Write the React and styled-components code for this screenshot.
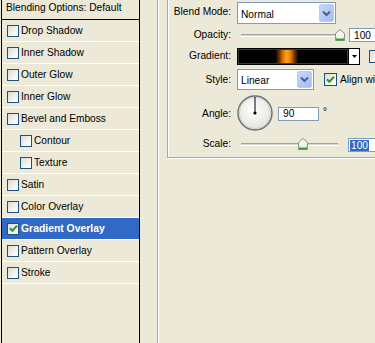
import React from "react";
import styled, { createGlobalStyle } from "styled-components";

const GlobalStyle = createGlobalStyle`
  html, body {
    margin: 0;
    padding: 0;
    background: #ece9d8;
  }
  body {
    font-family: "Liberation Sans", Arial, sans-serif;
    font-size: 10.2px;
    color: #000;
  }
`;

const Screen = styled.div`
  display: flex;
  width: 375px;
  height: 343px;
  overflow: hidden;
  background: #ece9d8;
`;

/* ---------- styles list (left) ---------- */

const StylesList = styled.div`
  flex: none;
  width: 137px;
  margin-left: 1px;
  border-left: 1px solid #000;
  border-right: 1px solid #000;
  display: flex;
  flex-direction: column;
`;

const ListHeader = styled.div`
  height: 15px;
  line-height: 15px;
  padding: 0 0 4px 4px;
  border-bottom: 1px solid #000;
  white-space: nowrap;
`;

const ListItem = styled.div`
  display: flex;
  align-items: center;
  gap: 2px;
  height: 21px;
  padding-left: ${(p) => (p.$indent ? "18px" : "5px")};
  border-bottom: 1px solid #fff;
  white-space: nowrap;
  background: ${(p) => (p.$selected ? "#316ac5" : "transparent")};
  color: ${(p) => (p.$selected ? "#fff" : "#000")};
  font-weight: ${(p) => (p.$selected ? "bold" : "normal")};
  font-size: ${(p) => (p.$selected ? "10.4px" : "10.2px")};
`;

const CheckBox = styled.span`
  flex: none;
  display: inline-flex;
  align-items: center;
  justify-content: center;
  width: ${(p) => p.$size || 12}px;
  height: ${(p) => p.$size || 12}px;
  box-sizing: border-box;
  border: 1px solid #1c5180;
  background: linear-gradient(135deg, #dcdcd5 0%, #f4f4f0 60%, #ffffff 100%);
`;

/* ---------- settings (right) ---------- */

const SettingsArea = styled.div`
  flex: 1;
  padding-left: 17px;
  display: flex;
`;

const OuterGroup = styled.div`
  flex: 1;
  border-left: 1px solid #aca899;
  box-shadow: inset 1px 0 0 #fff;
  padding-left: 9px;
`;

const InnerGroup = styled.div`
  width: 300px;
  align-self: flex-start;
  padding: 2px 0 5px 0;
  border-left: 1px solid #aca899;
  border-bottom: 1px solid #aca899;
  box-shadow: inset 1px 0 0 #fff, 0 1px 0 #fff;
  display: flex;
  flex-direction: column;
`;

const FormRow = styled.div`
  display: flex;
  align-items: center;
  height: ${(p) => p.$h}px;
  margin-top: ${(p) => p.$top || 0}px;
`;

const Label = styled.div`
  flex: none;
  width: 63px;
  margin-right: 6px;
  text-align: right;
  white-space: nowrap;
  padding-bottom: ${(p) => (p.$lift || 0) * 2}px;
`;

const Combo = styled.div`
  flex: none;
  display: flex;
  align-items: stretch;
  width: ${(p) => p.$w}px;
  height: ${(p) => p.$h}px;
  box-sizing: border-box;
  border: 1px solid #7f9db9;
  background: #fff;
  padding: 1px;
`;

const ComboText = styled.div`
  flex: 1;
  display: flex;
  align-items: center;
  padding-left: 2px;
  padding-top: 2px;
`;

const ComboButton = styled.div`
  flex: none;
  width: 15px;
  box-sizing: border-box;
  border: 1px solid #bccbf1;
  border-radius: 2px;
  background: linear-gradient(135deg, #c7d6fb 0%, #b4c8f5 55%, #a5bcef 100%);
  display: flex;
  align-items: center;
  justify-content: center;
`;

const SliderBox = styled.div`
  flex: none;
  position: relative;
  width: 108px;
  height: 12px;
  align-self: flex-start;
  margin-top: ${(p) => p.$top || 0}px;
`;

const SliderTrack = styled.div`
  margin: 5px 0 0 4px;
  width: 97px;
  height: 1px;
  border-top: 1px solid #a4a39e;
  border-bottom: 1px solid #fff;
  background: #d6d4ca;
`;

const SliderThumb = styled.svg`
  position: absolute;
  top: 0;
`;

const NumInput = styled.div`
  flex: none;
  width: ${(p) => p.$w}px;
  height: 14px;
  box-sizing: border-box;
  margin-left: ${(p) => p.$ml || 0}px;
  border: 1px solid #7f9db9;
  background: #fff;
  padding-left: ${(p) => (p.$selected ? 1 : 4)}px;
  display: flex;
  align-items: center;
`;

const Selection = styled.span`
  background: ${(p) => (p.$on ? "#316ac5" : "transparent")};
  color: ${(p) => (p.$on ? "#fff" : "#000")};
  padding: 0 1px;
  line-height: 11px;
`;

const GradientSwatch = styled.div`
  flex: none;
  width: 112px;
  height: 17px;
  box-sizing: border-box;
  border: 1px solid #000;
  box-shadow: inset 0 0 0 1px #3a3a3a;
  background: linear-gradient(
    to right,
    #000 0%,
    #000 34%,
    #5a2a00 37%,
    #e07800 41%,
    #ffa419 44.5%,
    #e07800 48%,
    #5a2a00 52%,
    #000 55%,
    #000 100%
  );
`;

const SwatchArrow = styled.div`
  flex: none;
  width: 11px;
  height: 17px;
  box-sizing: border-box;
  border: 1px solid #000;
  border-left: none;
  background: #fff;
  display: flex;
  align-items: center;
  justify-content: center;
`;

const InlineCheck = styled.div`
  flex: none;
  display: flex;
  align-items: center;
  gap: 3px;
  margin-left: ${(p) => p.$ml}px;
  white-space: nowrap;
`;

const Dial = styled.svg`
  flex: none;
`;

const Degree = styled.span`
  margin-left: 4px;
  align-self: flex-start;
  margin-top: 11px;
`;

const layerStyles = [
  { name: "Drop Shadow" },
  { name: "Inner Shadow" },
  { name: "Outer Glow" },
  { name: "Inner Glow" },
  { name: "Bevel and Emboss" },
  { name: "Contour", indent: true },
  { name: "Texture", indent: true },
  { name: "Satin" },
  { name: "Color Overlay" },
  { name: "Gradient Overlay", checked: true, selected: true },
  { name: "Pattern Overlay" },
  { name: "Stroke" },
];

function Check({ checked, size }) {
  return (
    <CheckBox $size={size}>
      {checked && (
        <svg width="9" height="9" viewBox="0 0 9 9">
          <path d="M1 4.2 L3.4 6.8 L8 1.8" fill="none" stroke="#21a121" strokeWidth="2" />
        </svg>
      )}
    </CheckBox>
  );
}

function ComboBox({ w, h, children }) {
  return (
    <Combo $w={w} $h={h}>
      <ComboText>{children}</ComboText>
      <ComboButton>
        <svg width="9" height="7" viewBox="0 0 9 7">
          <path d="M1 1.5 L4.5 5 L8 1.5" fill="none" stroke="#4d6185" strokeWidth="2" />
        </svg>
      </ComboButton>
    </Combo>
  );
}

function Slider({ value, min, max, top }) {
  const left = Math.round(((value - min) / (max - min)) * 98);
  return (
    <SliderBox $top={top}>
      <SliderTrack />
      <SliderThumb width="10" height="12" viewBox="0 0 10 12" style={{ left }}>
        <path d="M0.5 4.5 L5 0.5 L9.5 4.5 V11.5 H0.5 Z" fill="#f4f4ef" stroke="#8f8f8a" />
        <path d="M1 10.5 H9" stroke="#3aa02c" strokeWidth="2" />
        <path d="M1 8 V10 M9 8 V10" stroke="#7cc46e" strokeWidth="1" />
      </SliderThumb>
    </SliderBox>
  );
}

function AngleDial({ angle }) {
  const rad = (angle * Math.PI) / 180;
  const x = 18 + Math.cos(rad) * 16;
  const y = 18 - Math.sin(rad) * 16;
  return (
    <Dial width="37" height="37" viewBox="0 0 37 37">
      <defs>
        <radialGradient id="dialFill" cx="0.45" cy="0.4" r="0.6">
          <stop offset="0" stopColor="#ffffff" />
          <stop offset="1" stopColor="#e4e3dc" />
        </radialGradient>
      </defs>
      <circle cx="18" cy="18" r="17" fill="url(#dialFill)" stroke="#6e6e78" strokeWidth="1.4" />
      <circle cx="18" cy="18" r="15.6" fill="none" stroke="#c9c8c0" strokeWidth="0.8" />
      <line x1="18" y1="18" x2={x} y2={y} stroke="#000" strokeWidth="1" />
      <circle cx="18" cy="18" r="1.6" fill="#000" />
    </Dial>
  );
}

export default function App() {
  return (
    <Screen>
      <GlobalStyle />
      <StylesList>
        <ListHeader>Blending Options: Default</ListHeader>
        {layerStyles.map((s) => (
          <ListItem key={s.name} $indent={s.indent} $selected={s.selected}>
            <Check checked={s.checked} />
            {s.name}
          </ListItem>
        ))}
      </StylesList>

      <SettingsArea>
        <OuterGroup>
          <InnerGroup>
            <FormRow $h={22}>
              <Label $lift={1.5}>Blend Mode:</Label>
              <ComboBox w={99} h={22}>Normal</ComboBox>
            </FormRow>

            <FormRow $h={14} $top={4}>
              <Label $lift={1}>Opacity:</Label>
              <Slider value={100} min={0} max={100} top={1} />
              <NumInput $w={40} $ml={4}>100</NumInput>
            </FormRow>

            <FormRow $h={17} $top={6}>
              <Label $lift={1.5}>Gradient:</Label>
              <GradientSwatch />
              <SwatchArrow>
                <svg width="5" height="3" viewBox="0 0 5 3">
                  <path d="M0 0 H5 L2.5 3 Z" fill="#000" />
                </svg>
              </SwatchArrow>
              <InlineCheck $ml={9}>
                <Check size={13} />
              </InlineCheck>
            </FormRow>

            <FormRow $h={21} $top={4}>
              <Label>Style:</Label>
              <ComboBox w={77} h={21}>Linear</ComboBox>
              <InlineCheck $ml={10}>
                <Check size={13} checked />
                Align wi
              </InlineCheck>
            </FormRow>

            <FormRow $h={37} $top={5}>
              <Label>Angle:</Label>
              <AngleDial angle={90} />
              <NumInput $w={41} $ml={4}>90</NumInput>
              <Degree>°</Degree>
            </FormRow>

            <FormRow $h={14} $top={6}>
              <Label $lift={1.5}>Scale:</Label>
              <Slider value={100} min={0} max={160} />
              <NumInput $w={40} $ml={3} $selected>
                <Selection $on>100</Selection>
              </NumInput>
            </FormRow>
          </InnerGroup>
        </OuterGroup>
      </SettingsArea>
    </Screen>
  );
}
